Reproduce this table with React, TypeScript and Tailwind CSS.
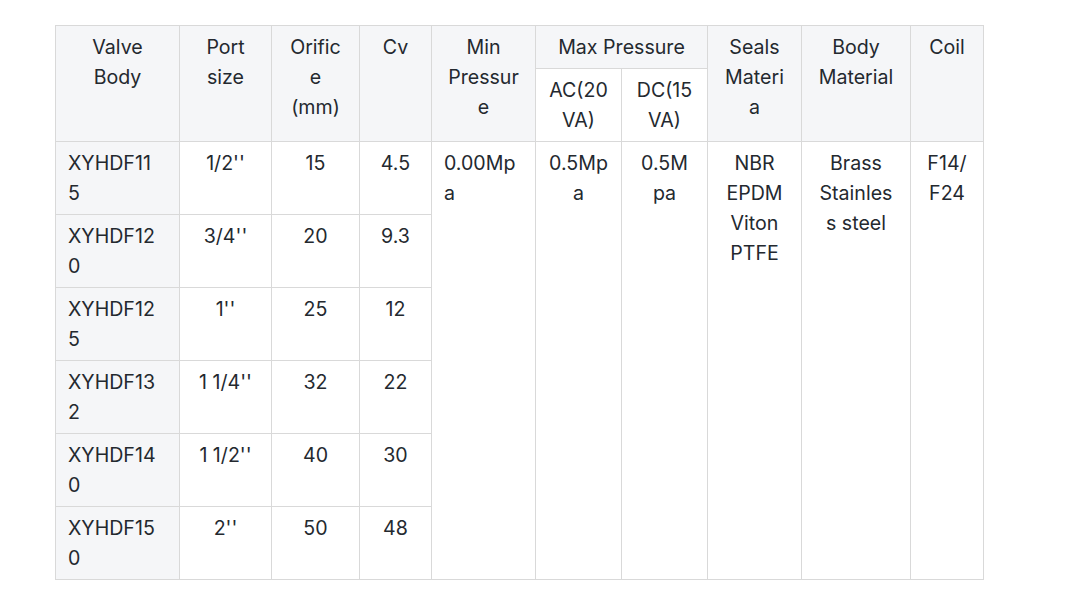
// Valve specification table

const rows = [
  { model: "XYHDF11|5", port: "1/2''", orifice: "15", cv: "4.5" },
  { model: "XYHDF12|0", port: "3/4''", orifice: "20", cv: "9.3" },
  { model: "XYHDF12|5", port: "1''", orifice: "25", cv: "12" },
  { model: "XYHDF13|2", port: "1 1/4''", orifice: "32", cv: "22" },
  { model: "XYHDF14|0", port: "1 1/2''", orifice: "40", cv: "30" },
  { model: "XYHDF15|0", port: "2''", orifice: "50", cv: "48" },
];

// "|" marks where the narrow cell wraps
function Lines({ text }: { text: string }) {
  const parts = text.split("|");
  return (
    <>
      {parts.map((p, i) => (
        <span key={i}>
          {p}
          {i < parts.length - 1 && <br />}
        </span>
      ))}
    </>
  );
}

const th =
  "border border-[#d9d9d9] bg-[#f5f6f8] px-3 py-[6px] text-center align-top font-normal whitespace-nowrap";
const td = "border border-[#d9d9d9] px-3 py-[6px] text-center align-top whitespace-nowrap";

export default function App() {
  return (
    <div
      className="w-[1079px] h-[600px] bg-white pt-[25px] pl-[55px] text-[#24292f] text-[19.6px] leading-[30px]"
      style={{ fontFamily: "Inter, 'Noto Sans', sans-serif" }}
    >
      <table className="table-fixed border-collapse w-[928px]">
        <colgroup>
          <col className="w-[124px]" />
          <col className="w-[92px]" />
          <col className="w-[88px]" />
          <col className="w-[72px]" />
          <col className="w-[104px]" />
          <col className="w-[86px]" />
          <col className="w-[86px]" />
          <col className="w-[94px]" />
          <col className="w-[109px]" />
          <col className="w-[73px]" />
        </colgroup>
        <thead>
          <tr>
            <th rowSpan={2} className={th}><Lines text="Valve|Body" /></th>
            <th rowSpan={2} className={th}><Lines text="Port|size" /></th>
            <th rowSpan={2} className={th}><Lines text="Orific|e|(mm)" /></th>
            <th rowSpan={2} className={th}>Cv</th>
            <th rowSpan={2} className={th}><Lines text="Min|Pressur|e" /></th>
            <th colSpan={2} className={th}>Max Pressure</th>
            <th rowSpan={2} className={th}><Lines text="Seals|Materi|a" /></th>
            <th rowSpan={2} className={th}><Lines text="Body|Material" /></th>
            <th rowSpan={2} className={th}>Coil</th>
          </tr>
          <tr>
            <th className={`${th} bg-white`}><Lines text="AC(20|VA)" /></th>
            <th className={`${th} bg-white`}><Lines text="DC(15|VA)" /></th>
          </tr>
        </thead>
        <tbody>
          {rows.map((r, i) => (
            <tr key={r.model} className="h-[73px]">
              <td className={`${td} bg-[#f5f6f8] text-left`}><Lines text={r.model} /></td>
              <td className={td}>{r.port}</td>
              <td className={td}>{r.orifice}</td>
              <td className={td}>{r.cv}</td>
              {i === 0 && (
                <>
                  <td rowSpan={6} className={`${td} text-left`}><Lines text="0.00Mp|a" /></td>
                  <td rowSpan={6} className={td}><Lines text="0.5Mp|a" /></td>
                  <td rowSpan={6} className={td}><Lines text="0.5M|pa" /></td>
                  <td rowSpan={6} className={td}><Lines text="NBR|EPDM|Viton|PTFE" /></td>
                  <td rowSpan={6} className={td}><Lines text="Brass|Stainles|s steel" /></td>
                  <td rowSpan={6} className={td}><Lines text="F14/|F24" /></td>
                </>
              )}
            </tr>
          ))}
        </tbody>
      </table>
    </div>
  );
}
